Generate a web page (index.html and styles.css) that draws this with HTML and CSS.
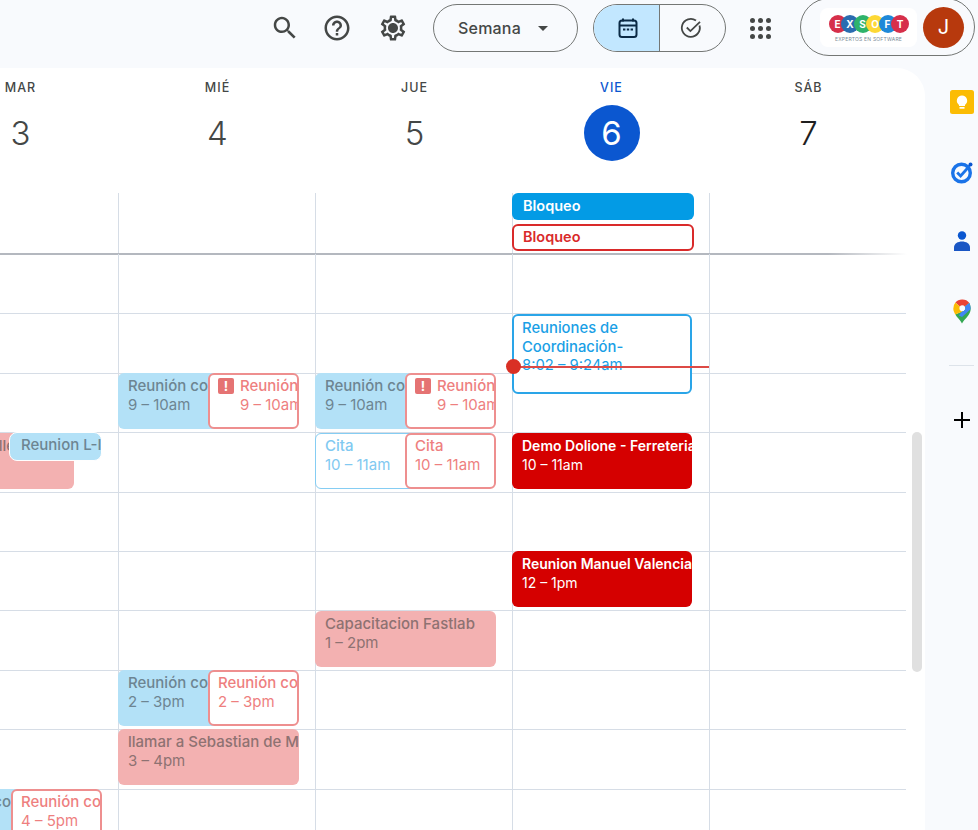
FILE: index.html
```html
<!DOCTYPE html>
<html lang="es">
<head>
  <meta charset="UTF-8">
  <title>Calendario - Semana</title>
  <link rel="stylesheet" href="styles.css">
</head>
<body>
  <header class="topbar">
    <button class="icon-btn"><svg viewBox="0 0 24 24"><path d="M15.5 14h-.79l-.28-.27C15.41 12.59 16 11.11 16 9.5 16 5.91 13.09 3 9.5 3S3 5.91 3 9.5 5.91 16 9.5 16c1.61 0 3.09-.59 4.23-1.57l.27.28v.79l5 4.99L20.49 19l-4.99-5zm-6 0C7.01 14 5 11.99 5 9.5S7.01 5 9.5 5 14 7.01 14 9.5 11.99 14 9.5 14z"/></svg></button>
    <button class="icon-btn"><svg viewBox="0 0 24 24"><path d="M11 18h2v-2h-2v2zm1-16C6.48 2 2 6.48 2 12s4.48 10 10 10 10-4.48 10-10S17.52 2 12 2zm0 18c-4.41 0-8-3.59-8-8s3.59-8 8-8 8 3.59 8 8-3.59 8-8 8zm0-14c-2.21 0-4 1.79-4 4h2c0-1.1.9-2 2-2s2 .9 2 2c0 2-3 1.75-3 5h2c0-2.25 3-2.5 3-5 0-2.21-1.79-4-4-4z"/></svg></button>
    <button class="icon-btn"><svg viewBox="0 0 24 24"><path d="M19.43 12.98c.04-.32.07-.64.07-.98 0-.34-.03-.66-.07-.98l2.11-1.65c.19-.15.24-.42.12-.64l-2-3.46c-.09-.16-.26-.25-.44-.25-.06 0-.12.01-.17.03l-2.49 1c-.52-.4-1.08-.73-1.69-.98l-.38-2.65C14.46 2.18 14.25 2 14 2h-4c-.25 0-.46.18-.49.42l-.38 2.65c-.61.25-1.17.59-1.69.98l-2.49-1c-.06-.02-.12-.03-.18-.03-.17 0-.34.09-.43.25l-2 3.46c-.13.22-.07.49.12.64l2.11 1.65c-.04.32-.07.65-.07.98 0 .33.03.66.07.98l-2.11 1.65c-.19.15-.24.42-.12.64l2 3.46c.09.16.26.25.44.25.06 0 .12-.01.17-.03l2.49-1c.52.4 1.08.73 1.69.98l.38 2.65c.03.24.24.42.49.42h4c.25 0 .46-.18.49-.42l.38-2.65c.61-.25 1.17-.59 1.69-.98l2.49 1c.06.02.12.03.18.03.17 0 .34-.09.43-.25l2-3.46c.12-.22.07-.49-.12-.64l-2.11-1.65zm-1.98-1.71c.04.31.05.52.05.73 0 .21-.02.43-.05.73l-.14 1.13.89.7 1.08.84-.7 1.21-1.27-.51-1.04-.42-.9.68c-.43.32-.84.56-1.25.73l-1.06.43-.16 1.13-.2 1.35h-1.4l-.19-1.35-.16-1.13-1.06-.43c-.43-.18-.83-.41-1.23-.71l-.91-.7-1.06.43-1.27.51-.7-1.21 1.08-.84.89-.7-.14-1.13c-.03-.31-.05-.54-.05-.74s.02-.43.05-.73l.14-1.13-.89-.7-1.08-.84.7-1.21 1.27.51 1.04.42.9-.68c.43-.32.84-.56 1.25-.73l1.06-.43.16-1.13.2-1.35h1.39l.19 1.35.16 1.13 1.06.43c.43.18.83.41 1.23.71l.91.7 1.06-.43 1.27-.51.7 1.21-1.07.85-.89.7.14 1.13zM12 8c-2.21 0-4 1.79-4 4s1.79 4 4 4 4-1.79 4-4-1.79-4-4-4z"/></svg></button>

    <button class="view-select">
      <span>Semana</span>
      <svg viewBox="0 0 10 5"><path d="M0 0h10L5 5z"/></svg>
    </button>

    <div class="view-toggle">
      <span class="toggle-part active">
        <svg viewBox="0 0 24 24"><path d="M7 2.500v3M17 2.500v3" class="cal-stroke"/><rect x="3.500" y="4.500" width="17" height="16.500" rx="2.500" class="cal-stroke"/><path d="M3.500 9.500h17" class="cal-stroke"/><path d="M7 12.500h2.400v2H7zM10.800 12.500h2.400v2h-2.400zM14.600 12.500H17v2h-2.400z"/></svg>
      </span>
      <span class="toggle-part">
        <svg viewBox="0 0 24 24"><path d="M20.500 9.500A9 9 0 1 1 17 4.500" class="chk-stroke"/><path d="M7.800 11.500l3.600 3.600L21 5.800" class="chk-stroke"/></svg>
      </span>
    </div>

    <div class="apps-grid">
      <i></i><i></i><i></i><i></i><i></i><i></i><i></i><i></i><i></i>
    </div>

    <div class="account">
      <div class="brand">
        <div class="brand-row">
          <span class="c-red">E</span><span class="c-navy">X</span><span class="c-green">S</span><span class="c-yellow">O</span><span class="c-blue">F</span><span class="c-red">T</span>
        </div>
        <div class="brand-sub">EXPERTOS EN SOFTWARE</div>
      </div>
      <div class="avatar">J</div>
    </div>
  </header>

  <div class="main">
    <section class="card">
      <div class="week">
        <div class="week-head">
          <div class="day-head"><span class="dow">MAR</span><span class="num">3</span></div>
          <div class="day-head"><span class="dow">MIÉ</span><span class="num">4</span></div>
          <div class="day-head"><span class="dow">JUE</span><span class="num">5</span></div>
          <div class="day-head today"><span class="dow">VIE</span><span class="num">6</span></div>
          <div class="day-head sat"><span class="dow">SÁB</span><span class="num">7</span></div>
        </div>

        <div class="allday">
          <div class="allday-col"></div>
          <div class="allday-col"></div>
          <div class="allday-col"></div>
          <div class="allday-col">
            <div class="chip chip-solid">Bloqueo</div>
            <div class="chip chip-line">Bloqueo</div>
          </div>
          <div class="allday-col"></div>
        </div>

        <div class="hours">
          <div class="day">
            <div class="ev at-10 wide-152 pink-soft"><b>Demo: Taller</b><span>10 – 11am</span></div>
            <div class="ev at-10b short blue-soft ringed"><b>Reunion L-Inicio</b></div>
            <div class="ev at-4 half blue-soft"><b>Reunión con</b><span>4 – 5pm</span></div>
            <div class="ev at-4 over red-soft-line"><b>Reunión con</b><span>4 – 5pm</span></div>
          </div>

          <div class="day">
            <div class="ev at-9 half blue-soft"><b>Reunión con</b><span>9 – 10am</span></div>
            <div class="ev at-9 over red-soft-line with-icon">
              <i class="warn">!</i><b>Reunión con</b><span>9 – 10am</span>
            </div>
            <div class="ev at-2 half blue-soft"><b>Reunión con</b><span>2 – 3pm</span></div>
            <div class="ev at-2 over red-soft-line"><b>Reunión con</b><span>2 – 3pm</span></div>
            <div class="ev at-3 full pink-soft"><b>llamar a Sebastian de Medellin</b><span>3 – 4pm</span></div>
          </div>

          <div class="day">
            <div class="ev at-9 half blue-soft"><b>Reunión con</b><span>9 – 10am</span></div>
            <div class="ev at-9 over red-soft-line with-icon">
              <i class="warn">!</i><b>Reunión con</b><span>9 – 10am</span>
            </div>
            <div class="ev at-10 half blue-soft-line"><b>Cita</b><span>10 – 11am</span></div>
            <div class="ev at-10 over red-soft-line"><b>Cita</b><span>10 – 11am</span></div>
            <div class="ev at-1 full pink-soft"><b>Capacitacion Fastlab</b><span>1 – 2pm</span></div>
          </div>

          <div class="day">
            <div class="ev at-8 tall blue-line"><b>Reuniones de Coordinación-</b><span>8:02 – 9:24am</span></div>
            <div class="ev at-10 full red-solid"><b>Demo Dolione - Ferreteria</b><span>10 – 11am</span></div>
            <div class="ev at-12 full red-solid"><b>Reunion Manuel Valencia</b><span>12 – 1pm</span></div>
            <div class="now-line"></div>
            <div class="now-dot"></div>
          </div>

          <div class="day"></div>
        </div>
      </div>
      <div class="scroll-thumb"></div>
    </section>

    <aside class="side">
      <svg class="side-ico" viewBox="0 0 26 26"><rect x="1" y="1" width="24" height="24" rx="2.500" fill="#fbbc04"/><path d="M13 6.500a5.200 5.200 0 0 0-3 9.400V17h6v-1.100a5.200 5.200 0 0 0-3-9.400z" fill="#fff"/><rect x="10.500" y="18" width="5" height="1.700" fill="#fff"/></svg>
      <svg class="side-ico" viewBox="0 0 26 26"><circle cx="12.500" cy="14" r="8.800" fill="none" stroke="#1a73e8" stroke-width="3.400"/><path d="M8.200 13.600l3.400 3.400L20.500 7" fill="none" stroke="#1a73e8" stroke-width="2.800"/><circle cx="21.500" cy="5.500" r="2" fill="#0b57d0"/></svg>
      <svg class="side-ico" viewBox="0 0 26 26"><circle cx="13" cy="7.500" r="4.200" fill="#0b57d0"/><path d="M5 23v-3.500c0-4 4-6 8-6s8 2 8 6V23z" fill="#1a56c4"/></svg>
      <svg class="side-ico" viewBox="0 0 26 26"><path d="M13 1.500c-2.600 0-5 1.200-6.600 2.900l4.400 4.200a3.200 3.200 0 0 1 5-.2l4.600-3.500A9 9 0 0 0 13 1.500z" fill="#ea4335"/><path d="M6.300 16.400c1.800 3 4.900 5.300 6.700 9.100 2.500-4.800 8.700-8.500 8.700-14.800 0-2.100-.5-4.200-1.300-5.800l-4.600 3.500a3.200 3.200 0 0 1-2.800 5z" fill="#34a853"/><path d="M20.400 4.900l-4.600 3.500a3.200 3.200 0 0 1-2.800 5l-3.200 4.200 3.200 1.400 8.500-7.800c.2-2.100-.4-4.300-1.100-6.300z" fill="#4285f4"/><path d="M6.400 4.400a8.800 8.800 0 0 0-2.100 6.300c0 1.800.9 3.900 2 5.700l7-3a3.200 3.200 0 0 1-2.500-4.800z" fill="#fbbc04"/></svg>
      <div class="side-sep"></div>
      <svg class="side-plus" viewBox="0 0 16 16"><path d="M7 0h2v7h7v2H9v7H7V9H0V7h7z"/></svg>
    </aside>
  </div>
</body>
</html>
```

FILE: styles.css
```css
* {
  margin: 0;
  padding: 0;
  box-sizing: border-box;
}

html, body {
  height: 100%;
}

body {
  font-family: Inter, "Noto Sans", sans-serif;
  background: #f8fafd;
  color: #1f1f1f;
  display: flex;
  flex-direction: column;
  overflow: hidden;
}

button {
  font: inherit;
  background: none;
  border: none;
  color: inherit;
}

/* top bar */
.topbar {
  height: 68px;
  flex: none;
  display: flex;
  align-items: flex-start;
  justify-content: flex-end;
  padding: 4px 3px 0 0;
}

.icon-btn {
  width: 30px;
  height: 48px;
  flex: none;
  margin-right: 22px;
  display: flex;
  align-items: center;
}

.icon-btn svg {
  width: 30px;
  height: 30px;
  fill: #444746;
}

.icon-btn:nth-child(2) {
  margin-right: 26px;
}

.icon-btn:nth-child(3) {
  margin-right: 25px;
}

.view-select {
  width: 145px;
  height: 48px;
  border: 1px solid #747775;
  border-radius: 24px;
  display: flex;
  align-items: center;
  padding-left: 24px;
  font-size: 16px;
  font-weight: 500;
  letter-spacing: .2px;
  color: #444746;
  margin-right: 15px;
}

.view-select svg {
  width: 10px;
  height: 5px;
  margin-left: 17px;
  fill: #444746;
}

.view-toggle {
  width: 133px;
  height: 48px;
  border: 1px solid #747775;
  border-radius: 24px;
  display: flex;
  overflow: hidden;
  margin-right: 24px;
}

.toggle-part {
  flex: 1;
  display: flex;
  align-items: center;
  justify-content: center;
  padding-right: 3px;
}

.toggle-part.active {
  background: #c2e7ff;
  border-right: 1px solid #747775;
  flex: 0 0 66px;
  padding: 0 0 0 3px;
}

.toggle-part svg {
  width: 24px;
  height: 24px;
  fill: #0b2a45;
}

.cal-stroke {
  fill: none;
  stroke: #0b2a45;
  stroke-width: 2;
}

.chk-stroke {
  fill: none;
  stroke: #444746;
  stroke-width: 1.8;
}

.apps-grid {
  width: 20px;
  height: 48px;
  display: grid;
  grid-template-columns: repeat(3, 5px);
  grid-auto-rows: 5px;
  gap: 3px;
  align-content: center;
  margin-right: 30px;
}

.apps-grid i {
  background: #444746;
  border-radius: 50%;
}

.account {
  width: 175px;
  height: 58px;
  margin-top: -6px;
  border: 1px solid #747775;
  border-radius: 29px;
  display: flex;
  align-items: center;
  padding-left: 19px;
  gap: 6px;
}

.brand {
  width: 97px;
  height: 39px;
  background: #fff;
  border-radius: 8px;
  display: flex;
  flex-direction: column;
  align-items: center;
  padding-top: 7px;
}

.brand-row {
  display: flex;
  padding-right: 5px;
}

.brand-row span {
  width: 18px;
  height: 18px;
  margin-right: -5.5px;
  border-radius: 50%;
  color: #fff;
  font-size: 10px;
  font-weight: 700;
  line-height: 18px;
  text-align: center;
}

.c-red { background: #d62f4a; }
.c-navy { background: #2a6cb0; }
.c-green { background: #2fb36b; }
.c-yellow { background: #fdd835; }
.c-blue { background: #1e88d8; }

.brand-sub {
  font-size: 5px;
  line-height: 7px;
  margin-top: 3px;
  color: #7b8a96;
  letter-spacing: .2px;
  white-space: nowrap;
}

.avatar {
  width: 41px;
  height: 41px;
  border-radius: 50%;
  background: #b7390d;
  color: #fff;
  font-size: 20px;
  line-height: 41px;
  text-align: center;
}

/* main area */
.main {
  flex: 1;
  display: flex;
  min-height: 0;
}

.card {
  width: 925px;
  flex: none;
  background: #fff;
  border-top-right-radius: 28px;
  overflow: hidden;
  position: relative;
}

.week {
  margin-left: -79px;
  width: 985px;
}

.week-head,
.allday,
.hours {
  display: grid;
  grid-template-columns: repeat(5, 197px);
  width: 985px;
}

.day-head {
  height: 125px;
  padding: 12px 0 0 2px;
  display: flex;
  flex-direction: column;
  align-items: center;
}

.dow {
  font-size: 12.5px;
  font-weight: 500;
  line-height: 16px;
  letter-spacing: 1px;
  color: #444746;
}

.num {
  width: 56px;
  height: 56px;
  margin-top: 9px;
  border-radius: 50%;
  font-size: 33px;
  font-weight: 300;
  line-height: 56px;
  text-align: center;
  color: #444746;
}

.today .dow {
  color: #0b57d0;
}

.today .num {
  background: #0b57d0;
  color: #fff;
  font-weight: 400;
}

.sat .num {
  color: #1f1f1f;
}

.allday {
  height: 61px;
  position: relative;
}

.allday::after {
  content: "";
  position: absolute;
  left: 0;
  top: 60px;
  width: 986px;
  height: 2px;
  background: linear-gradient(to right, #b4b8bf 92%, #fff);
}

.allday-col {
  border-left: 1px solid #d6dde6;
}

.chip {
  width: 182px;
  height: 27px;
  margin-left: -1px;
  margin-bottom: 4px;
  padding-left: 11px;
  border-radius: 6px;
  font-size: 14.5px;
  font-weight: 600;
  line-height: 26px;
}

.chip-solid {
  background: #039be5;
  color: #fff;
}

.chip-line {
  background: #fff;
  border: 2px solid #d92a2a;
  padding-left: 9px;
  line-height: 21px;
  color: #d92a2a;
}

.hours {
  height: 640px;
  background: repeating-linear-gradient(to bottom, transparent 0 58.4px, #d6dde6 58.4px 59.4px) 0 1px;
}

.day {
  position: relative;
  border-left: 1px solid #d6dde6;
}

/* events sit on the time grid */
.ev {
  position: absolute;
  height: 56px;
  padding: 4px 0 0 10px;
  border-radius: 6px;
  font-size: 15px;
  line-height: 18.6px;
  overflow: hidden;
  white-space: nowrap;
}

.ev b {
  display: block;
  font-weight: 500;
}

.ev span {
  display: block;
}

.at-8 { top: 60px; }
.at-9 { top: 119px; }
.at-10 { top: 179px; }
.at-10b { top: 178px; }
.at-12 { top: 297px; }
.at-1 { top: 357px; }
.at-2 { top: 416px; }
.at-3 { top: 475px; }
.at-4 { top: 535px; }

.full { left: -1px; width: 181px; }
.half { left: -1px; width: 100px; }
.over { left: 89px; width: 91px; }
.wide-152 { left: -1px; width: 153px; }

.short {
  left: 87px;
  width: 93px;
  height: 29px;
}

.tall {
  left: -1px;
  width: 180px;
  height: 80px;
  white-space: normal;
  font-size: 14.8px;
}

.blue-soft {
  background: #b3e1f7;
  color: #6d8592;
}

.pink-soft {
  background: #f3b1b1;
  color: #8e7272;
}

.ringed {
  border: 1px solid #fff;
  padding: 3px 0 0 11px;
  border-radius: 8px;
}

.blue-soft-line {
  background: #fff;
  border: 1px solid #85cdf3;
  color: #81c9f1;
  padding: 3px 0 0 9px;
}

.red-soft-line {
  background: #fff;
  border: 2px solid #ee8f8f;
  color: #ee7f7f;
  padding: 2px 0 0 8px;
}

.with-icon {
  padding-left: 30px;
}

.warn {
  position: absolute;
  left: 8px;
  top: 3px;
  width: 16px;
  height: 16px;
  border-radius: 2px;
  background: #e57373;
  color: #fff;
  font-size: 13px;
  font-style: normal;
  font-weight: 700;
  line-height: 16px;
  text-align: center;
}

.blue-line {
  background: #fff;
  border: 2px solid #2aa5e8;
  color: #1a9fe6;
  padding: 3px 0 0 8px;
}

.red-solid {
  width: 180px;
  background: #d50000;
  color: #fff;
  font-size: 14px;
}

.red-solid b {
  font-weight: 600;
}

.now-line {
  position: absolute;
  left: 0;
  right: 0;
  top: 112px;
  height: 2px;
  background: #dd4a45;
}

.now-dot {
  position: absolute;
  left: -7px;
  top: 105px;
  width: 15px;
  height: 15px;
  border-radius: 50%;
  background: #d93025;
}

.scroll-thumb {
  position: absolute;
  right: 3px;
  top: 364px;
  width: 10px;
  height: 240px;
  border-radius: 5px;
  background: #e0e0e0;
}

/* right side panel */
.side {
  flex: 1;
  display: flex;
  flex-direction: column;
  align-items: center;
  padding: 21px 0 0 20px;
}

.side-ico {
  width: 26px;
  height: 26px;
  flex: none;
  margin-bottom: 43.5px;
}

.side-sep {
  width: 25px;
  height: 1px;
  background: #dde3ea;
  margin-top: -2px;
  margin-bottom: 46px;
}

.side-plus {
  width: 16px;
  height: 16px;
}
```
